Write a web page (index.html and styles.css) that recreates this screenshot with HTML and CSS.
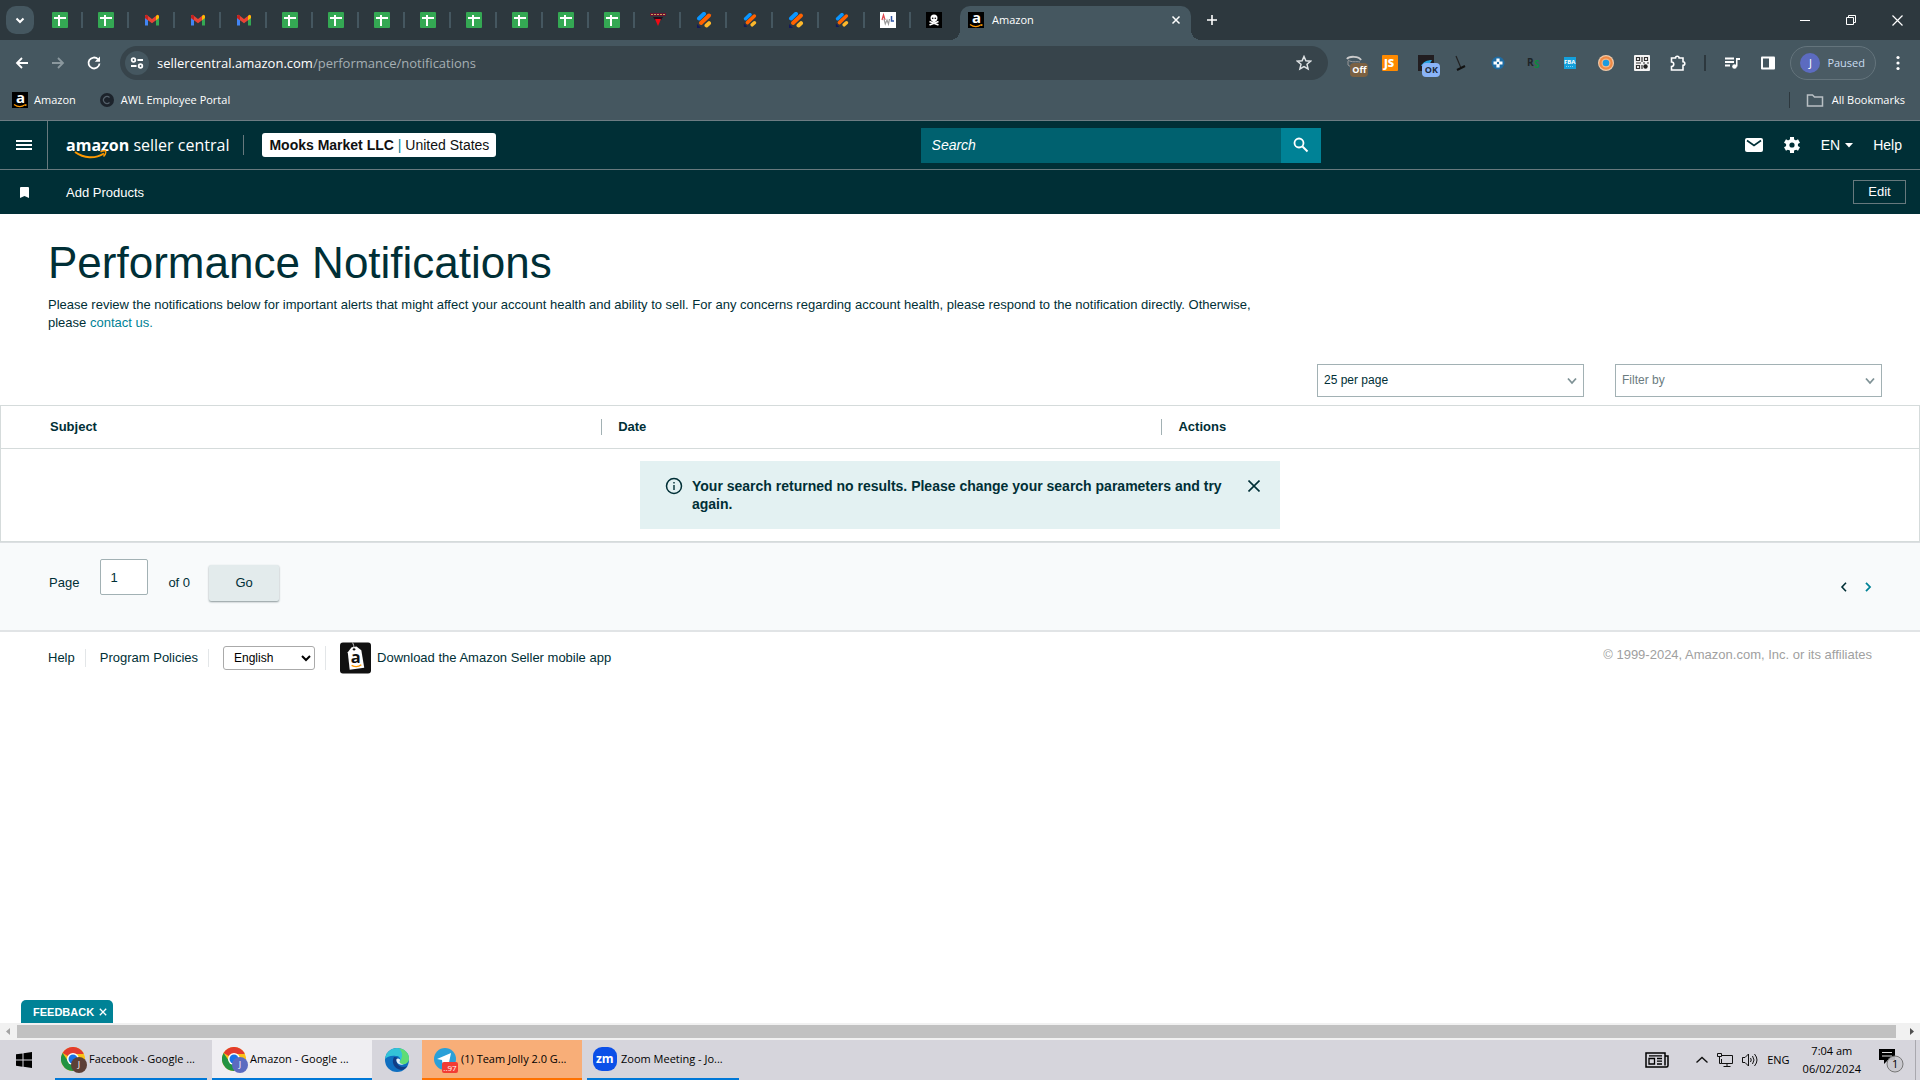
FILE: index.html
```html
<!DOCTYPE html>
<html lang="en">
<head>
<meta charset="utf-8">
<title>Amazon</title>
<link rel="stylesheet" href="styles.css">
</head>
<body>
<svg class="sprite" aria-hidden="true">
  <symbol id="sheet" viewBox="0 0 16 16"><rect width="16" height="16" rx="1" fill="#34a853"/><path d="M2 6h12M7 3v11" stroke="#fff" stroke-width="2" fill="none"/></symbol>
  <symbol id="gmail" viewBox="0 0 16 16"><path d="M1 5v8.500h3V7z" fill="#4285f4"/><path d="M15 5v8.500h-3V7z" fill="#34a853"/><path d="M1 3.500 2.500 2.800 8 7l5.500-4.200L15 3.500V6l-7 5.300L1 6z" fill="#ea4335"/><path d="M12 4 13.500 2.800 15 4v2l-3 2.200z" fill="#fbbc04"/><path d="M1 4v2l3 2.200V4L2.500 2.800z" fill="#c5221f"/></symbol>
  <symbol id="stripes" viewBox="0 0 16 16"><path d="M3 6.500 8 1.800" stroke="#0a95ff" stroke-width="4" stroke-linecap="round"/><path d="M5 11 13 3.500" stroke="#ff6200" stroke-width="4" stroke-linecap="round"/><path d="m10.500 13.500 2.500-2.300" stroke="#fdb82b" stroke-width="4" stroke-linecap="round"/><path d="M1 12v4h4z" fill="#14195a"/></symbol>
  <symbol id="amz" viewBox="0 0 16 16"><rect width="16" height="16" fill="#000"/><text x="4" y="11" font-size="15" font-weight="700" font-family="Open Sans, sans-serif" fill="#fff">a</text><path d="M2 12.500c3.500 2.500 8 2.500 11 .3M13.800 12v2" stroke="#f90" stroke-width="1.200" fill="none"/></symbol>
  <symbol id="chrome" viewBox="0 0 24 24"><circle cx="12" cy="12" r="12" fill="#fbc116"/><path d="M12 12 1.600 6A12 12 0 0 1 22.400 6L22.400 7H12z" fill="#e33b2e"/><path d="M1.600 6A12 12 0 0 0 12 24l5-9-5-3-5 2z" fill="#229342"/><circle cx="12" cy="12" r="6" fill="#fff"/><circle cx="12" cy="12" r="4.500" fill="#1a73e8"/></symbol>
</svg>

<div class="tabstrip">
  <button class="tab-search" aria-label="Search tabs"><svg width="12" height="12" viewBox="0 0 12 12"><path d="m2.500 4.500 3.500 3.500 3.500-3.500" fill="none" stroke="#fff" stroke-width="2"/></svg></button>
  <div class="pins">
    <span class="pin"><svg><use href="#sheet"/></svg></span>
    <span class="pin"><svg><use href="#sheet"/></svg></span>
    <span class="pin"><svg><use href="#gmail"/></svg></span>
    <span class="pin"><svg><use href="#gmail"/></svg></span>
    <span class="pin"><svg><use href="#gmail"/></svg></span>
    <span class="pin"><svg><use href="#sheet"/></svg></span>
    <span class="pin"><svg><use href="#sheet"/></svg></span>
    <span class="pin"><svg><use href="#sheet"/></svg></span>
    <span class="pin"><svg><use href="#sheet"/></svg></span>
    <span class="pin"><svg><use href="#sheet"/></svg></span>
    <span class="pin"><svg><use href="#sheet"/></svg></span>
    <span class="pin"><svg><use href="#sheet"/></svg></span>
    <span class="pin"><svg><use href="#sheet"/></svg></span>
    <span class="pin"><svg viewBox="0 0 16 16"><path d="M0 1h16v3H0z" fill="#6b1230"/><path d="M1 2.500h14" stroke="#c9a25a" stroke-dasharray="2 1"/><path d="M3 5h10l-2 3H5z" fill="#2a0a1a"/><path d="M5 7h6l-3 7z" fill="#f00a14"/></svg></span>
    <span class="pin"><svg><use href="#stripes"/></svg></span>
    <span class="pin small"><svg><use href="#stripes"/></svg></span>
    <span class="pin"><svg><use href="#stripes"/></svg></span>
    <span class="pin small"><svg><use href="#stripes"/></svg></span>
    <span class="pin"><svg viewBox="0 0 16 16"><rect width="16" height="16" fill="#fff"/><path d="m2 8 1.500-5L5 8" stroke="#e0484f" stroke-width="1.300" fill="none"/><path d="m4 7 1.300 5L7 8l1.500 4L9.500 7" stroke="#999" stroke-width="1.200" fill="none"/><path d="M11.500 4v5H14" stroke="#3155a5" stroke-width="1.500" fill="none"/></svg></span>
    <span class="pin last"><svg viewBox="0 0 16 16"><rect width="16" height="16" fill="#000"/><circle cx="8" cy="6" r="3.500" fill="#fff"/><path d="M6.500 8h3v2.500h-3z" fill="#fff"/><path d="m3.500 9.500 9 3.500m0-3.500-9 3.500" stroke="#fff" stroke-width="1.600"/><circle cx="6.700" cy="6.300" r=".8"/><circle cx="9.300" cy="6.300" r=".8"/></svg></span>
  </div>
  <div class="tab-active">
    <svg width="16" height="16"><use href="#amz"/></svg><span>Amazon</span>
    <button aria-label="Close tab"><svg width="10" height="10" viewBox="0 0 10 10"><path d="m1.500 1.500 7 7m0-7-7 7" stroke="#fff" stroke-width="1.500"/></svg></button>
  </div>
  <button class="new-tab" aria-label="New tab"><svg width="12" height="12" viewBox="0 0 12 12"><path d="M6 1v10M1 6h10" stroke="#fff" stroke-width="1.600"/></svg></button>
  <div class="win">
    <button aria-label="Minimize"><svg width="10" height="10" viewBox="0 0 10 10"><path d="M0 5.500h10" stroke="#fff"/></svg></button>
    <button aria-label="Restore"><svg width="10" height="10" viewBox="0 0 10 10"><path d="M.5 2.500h7v7h-7zM2.500 2.500v-2h7v7h-2" fill="none" stroke="#fff"/></svg></button>
    <button aria-label="Close"><svg width="11" height="11" viewBox="0 0 11 11"><path d="m.5.5 10 10m0-10-10 10" stroke="#fff" stroke-width="1.200"/></svg></button>
  </div>
</div>

<div class="toolbar">
  <div class="nav">
    <button aria-label="Back"><svg width="16" height="16" viewBox="0 0 16 16"><path d="M14 8H3m5-5L3 8l5 5" fill="none" stroke="#fff" stroke-width="1.800"/></svg></button>
    <button aria-label="Forward"><svg width="16" height="16" viewBox="0 0 16 16"><path d="M2 8h11M8 3l5 5-5 5" fill="none" stroke="#8b989e" stroke-width="1.800"/></svg></button>
    <button aria-label="Reload"><svg width="16" height="16" viewBox="0 0 16 16"><path d="M13.500 8.500A5.500 5.500 0 1 1 12 4.200" fill="none" stroke="#fff" stroke-width="1.800"/><path d="M14 1.500v5.300H8.800z" fill="#fff"/></svg></button>
  </div>
  <div class="omnibox">
    <span class="site"><svg width="14" height="14" viewBox="0 0 14 14" fill="none" stroke="#fff" stroke-width="1.800"><circle cx="3.500" cy="4" r="1.800"/><path d="M7.500 4H13M1 10h5.500"/><circle cx="10.500" cy="10" r="1.800"/></svg></span>
    <span class="url">sellercentral.amazon.com<i>/performance/notifications</i></span>
    <svg width="16" height="16" viewBox="0 0 16 16"><path d="m8 1.500 1.900 4.300 4.700.4-3.600 3.100 1.100 4.600L8 11.500l-4.100 2.400L5 9.300 1.400 6.200l4.700-.4z" fill="none" stroke="#dfe3e5" stroke-width="1.500"/></svg>
  </div>
  <div class="exts">
    <span class="ext"><svg viewBox="0 0 16 16" fill="none" stroke="#ccc"><path d="M1 4c2-3 12-3 14 1" stroke-width="2"/><path d="M2 5c4 3 8 1 12 2M2 6v4l3 2" stroke="#999"/></svg><b class="badge off">Off</b></span>
    <span class="ext"><svg viewBox="0 0 16 16"><rect width="16" height="16" rx="1" fill="#ff8a00"/><text x="2" y="12" font-size="11" font-weight="800" font-family="Open Sans, sans-serif" fill="#fff">JS</text></svg></span>
    <span class="ext"><svg viewBox="0 0 16 16"><rect width="16" height="16" fill="#211d20"/><path d="M3 11c2-4 6-6 11-6l-3 5z" fill="#28a3e0"/></svg><b class="badge ok">OK</b></span>
    <span class="ext"><svg viewBox="0 0 16 16"><path d="m2 1 5 12" stroke="#222" stroke-width="1.200"/><path d="m3 15 8-4" stroke="#111" stroke-width="2"/></svg></span>
    <span class="ext"><svg viewBox="0 0 16 16"><circle cx="8" cy="8" r="6.500" fill="#1f6ca3"/><path d="M8 3.500v9M3.500 8h9" stroke="#fff" stroke-width="3.200"/><circle cx="8" cy="8" r="1.200" fill="#1f6ca3"/></svg></span>
    <span class="ext"><svg viewBox="0 0 16 16" font-weight="700" font-family="Open Sans, sans-serif" font-size="10"><text x="1" y="11" fill="#1c2427">R</text><text x="8" y="13" fill="#0b8a3e">S</text></svg></span>
    <span class="ext"><svg viewBox="0 0 16 16"><rect x="2" y="2" width="12" height="12" fill="#14a0dc"/><text x="2" y="9" font-size="6" font-weight="700" font-family="Open Sans, sans-serif" fill="#fff">FBA</text><path d="M4 11.500h8" stroke="#7fd0f0" stroke-dasharray="1 1"/></svg></span>
    <span class="ext"><svg viewBox="0 0 16 16"><circle cx="8" cy="8" r="8" fill="#f0c9a8"/><circle cx="8" cy="8" r="6.800" fill="#ef8a45"/><circle cx="8" cy="8" r="4.500" fill="#f7b98a"/><circle cx="8" cy="8" r="3.300" fill="#1d9be0"/></svg></span>
    <span class="ext"><svg viewBox="0 0 16 16"><rect width="16" height="16" rx="1" fill="#f4f4f4"/><path d="M2.500 2.500h3v3h-3zM10.500 2.500h3v3h-3zM2.500 10.500h3v3h-3zM2 8h5M8 2v5M9 8h2M13 8h2M8 10v4" fill="none" stroke="#333" stroke-width="1.200"/><circle cx="11.500" cy="11.500" r="2.200" fill="#222"/></svg></span>
    <span class="ext"><svg viewBox="0 0 16 16"><path d="M1.500 3h4a1.800 1.800 0 0 1 3.600 0H13v3.800a1.800 1.800 0 0 1 0 3.600V15H1.500v-3.500a2 2 0 0 0 0-4.500z" fill="none" stroke="#fff" stroke-width="1.600"/></svg></span>
  </div>
  <div class="chrome-menu">
    <svg width="16" height="16" viewBox="0 0 16 16"><path d="M1 3.500h9M1 7h9M1 10.500h5" stroke="#fff" stroke-width="1.800"/><circle cx="10.500" cy="11.500" r="2.300" fill="#fff"/><path d="M12 11.500V3h4v2h-2.500v6.500z" fill="#fff"/></svg>
    <svg width="16" height="16" viewBox="0 0 16 16"><rect x="1" y="1.500" width="14" height="13" rx="1" fill="#fff"/><path d="M3 3.500h6v9H3z" fill="#455760"/></svg>
    <button class="profile"><b>J</b>Paused</button>
    <svg width="16" height="16" viewBox="0 0 16 16" fill="#fff"><circle cx="8" cy="2.500" r="1.600"/><circle cx="8" cy="8" r="1.600"/><circle cx="8" cy="13.500" r="1.600"/></svg>
  </div>
</div>

<div class="bookmarks">
  <a href="#"><svg width="16" height="16"><use href="#amz"/></svg>Amazon</a>
  <a href="#"><svg width="16" height="16" viewBox="0 0 16 16"><circle cx="8" cy="8" r="7" fill="#1c232b"/><path d="M10.500 5.500a3.500 3.500 0 1 0 0 5" fill="none" stroke="#54606a" stroke-width="1.200"/></svg>AWL Employee Portal</a>
  <a href="#" class="all"><svg width="18" height="16" viewBox="0 0 18 16"><path d="M1.500 3h5l2 2h8v9h-15z" fill="none" stroke="#b9c0c4" stroke-width="1.500"/></svg>All Bookmarks</a>
</div>

<header class="masthead">
  <button class="burger" aria-label="Menu"><svg width="16" height="12" viewBox="0 0 16 12"><path d="M0 2h16M0 6h16M0 10h16" stroke="#fff" stroke-width="2"/></svg></button>
  <a href="#" class="logo"><b>amazon</b> seller central<svg width="34" height="10" viewBox="0 0 34 10"><path d="M1 2c9 6.500 20 7 29 1.500" fill="none" stroke="#f90" stroke-width="2"/><path d="M26.500 1.800c2-.9 4-1.200 5-.8.500 1-.2 3.500-2 5.500" fill="none" stroke="#f90" stroke-width="1.500"/></svg></a>
  <button class="account"><b>Mooks Market LLC</b> <i>|</i> United States</button>
  <form class="search"><input type="text" placeholder="Search" aria-label="Search"><button type="button" aria-label="Go"><svg width="16" height="16" viewBox="0 0 16 16"><circle cx="6" cy="6" r="4.500" fill="none" stroke="#fff" stroke-width="1.800"/><path d="m9.500 9.500 5 5" stroke="#fff" stroke-width="2"/></svg></button></form>
  <nav class="tools">
    <a href="#" aria-label="Messages"><svg width="18" height="14" viewBox="0 0 18 14"><rect width="18" height="14" rx="2" fill="#fff"/><path d="m2 2.500 7 5 7-5" fill="none" stroke="#002f36" stroke-width="1.600"/></svg></a>
    <a href="#" aria-label="Settings"><svg width="18" height="18" viewBox="0 0 18 18"><g stroke="#fff" stroke-width="4"><path d="M9 1v16M2 5l14 8M2 13l14-8"/></g><circle cx="9" cy="9" r="6" fill="#fff"/><circle cx="9" cy="9" r="2.600" fill="#002f36"/></svg></a>
    <a href="#" class="lang">EN<svg width="8" height="5" viewBox="0 0 8 5"><path d="M0 0h8L4 4.500z" fill="#fff"/></svg></a>
    <a href="#">Help</a>
  </nav>
</header>
<div class="favbar">
  <svg width="9" height="11" viewBox="0 0 9 11"><path d="M0 1q0-1 1-1h7q1 0 1 1v10L4.500 9 0 11z" fill="#fff"/></svg>
  <a href="#">Add Products</a>
  <button>Edit</button>
</div>

<main>
  <section class="intro">
    <h1>Performance Notifications</h1>
    <p>Please review the notifications below for important alerts that might affect your account health and ability to sell. For any concerns regarding account health, please respond to the notification directly. Otherwise, please <a href="#">contact us.</a></p>
  </section>
  <div class="filters">
    <span class="pick"><select aria-label="Results per page"><option>25 per page</option></select><svg width="10" height="8" viewBox="0 0 10 8"><path d="m1 1.500 4 4.500 4-4.500" fill="none" stroke="#7f9296" stroke-width="1.800"/></svg></span>
    <span class="pick muted"><select aria-label="Filter by"><option>Filter by</option></select><svg width="10" height="8" viewBox="0 0 10 8"><path d="m1 1.500 4 4.500 4-4.500" fill="none" stroke="#7f9296" stroke-width="1.800"/></svg></span>
  </div>
  <table>
    <thead><tr><th class="subject">Subject</th><th class="date"><span>Date</span></th><th><span>Actions</span></th></tr></thead>
    <tbody><tr><td colspan="3">
      <div class="alert" role="status">
        <svg width="18" height="18" viewBox="0 0 18 18"><circle cx="9" cy="9" r="7.500" fill="none" stroke="#002f36" stroke-width="1.500"/><path d="M9 8v5M9 5v1.500" stroke="#002f36" stroke-width="1.400"/></svg>
        <strong>Your search returned no results. Please change your search parameters and try again.</strong>
        <button aria-label="Dismiss"><svg width="12" height="12" viewBox="0 0 12 12"><path d="m.5.5 11 11m0-11-11 11" stroke="#002f36" stroke-width="1.600"/></svg></button>
      </div>
    </td></tr></tbody>
  </table>
  <form class="pager">
    <label for="pg">Page</label><input id="pg" type="text" value="1"><span>of 0</span><button type="button" class="go">Go</button>
    <div class="steps">
      <button type="button" aria-label="Previous"><svg width="8" height="10" viewBox="0 0 8 10"><path d="M6 .8 2 5l4 4.200" fill="none" stroke="#002f36" stroke-width="1.600"/></svg></button>
      <button type="button" aria-label="Next"><svg width="8" height="10" viewBox="0 0 8 10"><path d="m2 .8 4 4.200-4 4.200" fill="none" stroke="#008296" stroke-width="1.800"/></svg></button>
    </div>
  </form>
  <footer>
    <a href="#" class="cell">Help</a>
    <a href="#" class="cell">Program Policies</a>
    <span class="cell"><select aria-label="Language"><option>English</option></select></span>
    <a href="#" class="app"><svg width="31" height="32" viewBox="0 0 32 32"><rect width="32" height="32" rx="3" fill="#111"/><path d="m8 10 4-5 5-1 5 4 3 18-15 2z" fill="#fff"/><circle cx="14.500" cy="7" r="1.300" fill="#111"/><path d="M14.500 6.500C14.500 4 14 2 13 0" stroke="#ccc" fill="none"/><text x="11" y="21" font-size="17" font-weight="700" font-family="Open Sans, sans-serif" fill="#111">a</text><path d="M12 23.500c3.500 2 7 1.800 10-.5" stroke="#f90" stroke-width="1.500" fill="none"/></svg>Download the Amazon Seller mobile app</a>
    <small>© 1999-2024, Amazon.com, Inc. or its affiliates</small>
  </footer>
  <button class="feedback">FEEDBACK<svg width="8" height="8" viewBox="0 0 8 8"><path d="m.8.8 6.400 6.400m0-6.400L.8 7.200" stroke="#fff" stroke-width="1.300"/></svg></button>
</main>

<div class="hscroll">
  <svg width="17" height="17" viewBox="0 0 17 17"><path d="M10 5v7L6 8.500z" fill="#a3a3a3"/></svg>
  <div class="thumb"></div>
  <svg width="17" height="17" viewBox="0 0 17 17"><path d="M7 5v7l4-3.500z" fill="#505050"/></svg>
</div>

<div class="taskbar">
  <button class="start" aria-label="Start"><svg width="16" height="16" viewBox="0 0 16 16"><path d="M0 2.300 6.500 1.400v6.200H0zM7.500 1.200 16 0v7.600H7.500zM0 8.500h6.500v6.200L0 13.800zM7.500 8.500H16V16l-8.500-1.200z"/></svg></button>
  <button class="task gap"><span class="ico"><svg width="24" height="24"><use href="#chrome"/></svg><b class="who brown">J</b></span>Facebook - Google ...</button>
  <button class="task current"><span class="ico"><svg width="24" height="24"><use href="#chrome"/></svg><b class="who indigo">J</b></span>Amazon - Google ...</button>
  <button class="edge" aria-label="Edge"><svg width="24" height="24" viewBox="0 0 24 24"><circle cx="12" cy="12" r="12" fill="#0f6fc0"/><path d="M0 11C1 4 6 0 12 0c7 0 12 5 12 10 0 4-3 6-6 6s-4-1-3-3c1-3-1-5-4-5C6 7 2 9 0 11z" fill="#33c3d8"/><path d="M14 .2c6 1 10 5 10 10 0 4-3 6-6 6s-4-1-3-3c3-4 3-9-1-13z" fill="#5fdc74"/><path d="M9 9c-3 5 0 12 7 13 3 0 5-2 6.500-4-4 2-9 1-10.500-3-1-2 0-4 1-5-1-1-3-1-4-1z" fill="#123e86"/><path d="M11.500 11c1-1 2.500-.5 3.500.5.500 1-1 2 0 3.500 1 1.200 3 1.200 4.500.8-3 1.700-6 .7-7.200-1-.8-1.300-1.200-2.600-.8-3.800z" fill="#e4f4fb"/></svg></button>
  <button class="task alerting"><span class="ico"><svg width="24" height="24" viewBox="0 0 24 24"><circle cx="12" cy="12" r="11" fill="#2aa0d8"/><path d="m4 12 14-6-2.500 12-4-3-2 2-.5-4z" fill="#fff"/></svg><b class="count">..97</b></span>(1) Team Jolly 2.0 G...</button>
  <button class="task zoom"><span class="ico"><svg width="24" height="24" viewBox="0 0 24 24"><rect width="24" height="24" rx="9" fill="#0b4fe8"/><text x="3" y="16" font-size="12" font-weight="700" font-family="Open Sans, sans-serif" fill="#fff">zm</text></svg></span>Zoom Meeting - Jo...</button>
  <div class="tray">
    <svg width="24" height="16" viewBox="0 0 24 16" fill="none" stroke="#000" stroke-width="1.500"><path d="M20 1H1v14h20.500a1.500 1.500 0 0 0 1.500-1.500V4h-3zM20 4v9.500"/><path d="M4 6.500h5.500v5.500H4zM4 3.800h13M12 6.500h5M12 9.200h5M12 12h5" stroke-width="1.300"/></svg>
    <svg class="up" width="12" height="8" viewBox="0 0 12 8"><path d="m.5 6.500 5.500-5 5.500 5" fill="none" stroke="#111" stroke-width="1.400"/></svg>
    <svg width="16" height="14" viewBox="0 0 16 14" fill="none" stroke="#111"><path d="M5 2.500h10.500v8H4.500V6M10 10.500v3M6.500 13.500h7M.5.500h4v3h-4zM2.500 3.500v7h2"/></svg>
    <svg width="16" height="14" viewBox="0 0 16 14" fill="none" stroke="#111"><path d="M.5 4.500H3L6.500 1v12L3 9.500H.5zM8.500 5q1.500 2 0 4M10.500 3q3 4 0 8M12.500 1q5 6 0 12"/></svg>
    <span>ENG</span>
    <span class="clock">7:04 am<br>06/02/2024</span>
    <svg width="26" height="26" viewBox="0 0 26 26"><path d="M0 2h16v11H9l-4 4v-4H0z"/><path d="M3 5.500h10M3 9h10" stroke="#ddd"/><circle cx="16" cy="17" r="8" fill="#c9c8cd" fill-opacity=".9" stroke="#777"/><text x="13" y="21" font-size="11" font-family="Open Sans, sans-serif">1</text></svg>
  </div>
</div>
</body>
</html>
```
FILE: styles.css
```css
* { box-sizing: border-box; }
body {
  margin: 0;
  min-height: 100vh;
  display: flex;
  flex-direction: column;
  background: #fff;
  color: #002f36;
  font: 13px/18px "Liberation Sans", Arial, sans-serif;
}
button, input, select { font: inherit; color: inherit; margin: 0; }
button { border: 0; padding: 0; background: none; }
a { color: inherit; text-decoration: none; }
svg { display: block; flex: none; }
.sprite { display: none; }

/* Browser frame */
.tabstrip, .toolbar, .bookmarks, .taskbar {
  display: flex;
  align-items: center;
  font: 11px/16px "Open Sans", sans-serif;
  color: #fff;
}
.tabstrip { height: 40px; background: #2d383e; }
.tab-search {
  width: 28px;
  height: 28px;
  margin: 0 3px 0 6px;
  border-radius: 10px;
  background: #455760;
  display: grid;
  place-items: center;
}
.pins { display: flex; }
.pin {
  width: 46px;
  height: 16px;
  padding-left: 15px;
  border-right: 2px solid #455760;
}
.pin svg { width: 16px; height: 16px; }
.pin.small svg { padding: 1px; }
.pin.last { border-color: transparent; }
.tab-active {
  position: relative;
  display: flex;
  align-items: center;
  align-self: flex-end;
  gap: 8px;
  width: 231px;
  height: 34px;
  margin-left: 3px;
  padding: 0 10px 6px 8px;
  border-radius: 10px 10px 0 0;
  background: #455760;
}
.tab-active::before, .tab-active::after {
  content: "";
  position: absolute;
  bottom: 0;
  width: 10px;
  height: 10px;
}
.tab-active::before { right: 100%; background: radial-gradient(circle at 0 0, transparent 10px, #455760 10px); }
.tab-active::after { left: 100%; background: radial-gradient(circle at 100% 0, transparent 10px, #455760 10px); }
.tab-active button { margin-left: auto; }
.new-tab { margin-left: 15px; }
.win { display: flex; margin-left: auto; }
.win button { width: 46px; height: 40px; display: grid; place-items: center; }

.toolbar { height: 40px; padding: 6px 14px 0; background: #455760; }
.nav { display: flex; gap: 20px; margin-right: 18px; }
.omnibox {
  flex: 1;
  display: flex;
  align-items: center;
  height: 34px;
  padding: 0 16px 0 5px;
  border-radius: 17px;
  background: #37444b;
}
.site {
  width: 24px;
  height: 24px;
  border-radius: 12px;
  background: #455760;
  display: grid;
  place-items: center;
}
.url { flex: 1; margin-left: 8px; font-size: 13px; }
.url i { font-style: normal; color: #a5afb3; }
.exts {
  display: flex;
  gap: 20px;
  margin-left: 18px;
  padding-right: 18px;
  border-right: 2px solid #2d383e;
}
.ext { position: relative; width: 16px; height: 16px; }
.ext svg { width: 16px; height: 16px; }
.badge {
  position: absolute;
  left: 4px;
  top: 8px;
  width: 18px;
  height: 14px;
  border-radius: 4px;
  font: bold 9px/14px "Open Sans", sans-serif;
  text-align: center;
}
.off { background: #7b6142; }
.ok { background: #8ab4f8; color: #1c2a3a; }
.chrome-menu { display: flex; align-items: center; gap: 14px; margin-left: 18px; }
.chrome-menu > svg:first-child { margin-right: 6px; }
.profile {
  display: flex;
  align-items: center;
  gap: 7px;
  height: 34px;
  padding: 0 10px 0 9px;
  border: 1px solid #64747c;
  border-radius: 17px;
  background: #4a5b64;
  color: #c9dcf0;
}
.profile b { width: 20px; border-radius: 10px; background: #5c6bc0; font-weight: 400; line-height: 20px; color: #fff; }

.bookmarks {
  height: 41px;
  gap: 23px;
  padding: 0 15px 0 12px;
  border-bottom: 1px solid #6d7c83;
  background: #455760;
}
.bookmarks a { display: flex; align-items: center; gap: 6px; }
.bookmarks .all { margin-left: auto; padding-left: 16px; border-left: 1px solid #2d383e; gap: 8px; }

/* Seller Central header */
.masthead {
  display: flex;
  align-items: center;
  height: 49px;
  padding-right: 18px;
  border-bottom: 1px solid #67797d;
  background: #002f36;
  color: #fff;
  font-size: 14px;
}
.burger { width: 48px; align-self: stretch; border-right: 1px solid #67797d; display: grid; place-items: center; }
.logo {
  position: relative;
  margin-left: 18px;
  padding-right: 14px;
  border-right: 1px solid #67797d;
  font: 16px/20px "Open Sans", sans-serif;
}
.logo svg { position: absolute; left: 8px; top: 15px; }
.account {
  height: 24px;
  margin-left: 18px;
  padding: 0 7px;
  border-radius: 3px;
  background: #fff;
  color: #0f1111;
}
.account i { font-style: normal; color: #008296; }
.search { display: flex; width: 400px; height: 35px; margin: 0 auto; }
.search input {
  flex: 1;
  min-width: 0;
  padding: 0 11px;
  border: 0;
  background: #00616f;
  font-style: italic;
}
.search input::placeholder { color: #fff; opacity: 1; }
.search button { width: 40px; background: #008296; display: grid; place-items: center; }
.tools { display: flex; align-items: center; gap: 20px; }
.lang { display: flex; align-items: center; gap: 5px; }

.favbar {
  display: flex;
  align-items: center;
  height: 44px;
  padding: 0 14px 0 20px;
  background: #002f36;
  color: #fff;
}
.favbar a { margin-left: 37px; padding-top: 2px; }
.favbar button { margin-left: auto; width: 53px; height: 24px; border: 1px solid #67797d; }

/* Page content */
main { position: relative; flex: 1; }
.intro { padding: 23px 48px 0; }
h1 { margin: 0; font-size: 44px; line-height: 52px; font-weight: 400; }
.intro p { max-width: 1240px; margin: 7px 0 0; }
.intro a { color: #008296; }
.filters { display: flex; justify-content: flex-end; gap: 31px; margin: 32px 38px 8px; }
.pick { display: grid; width: 267px; align-items: center; }
.pick select, .pick svg { grid-area: 1 / 1; }
.pick select {
  appearance: none;
  height: 33px;
  padding: 0 6px 2px;
  border: 1px solid #a2b1b4;
  border-radius: 0;
  background: #fff;
  font-size: 12px;
}
.pick svg { justify-self: end; margin-right: 7px; pointer-events: none; }
.muted select { color: #6b7c80; }

table { width: 100%; border-collapse: collapse; border: 1px solid #d5dbdb; }
th { height: 43px; padding: 0; text-align: left; border-bottom: 1px solid #d5dbdb; }
th span { display: block; padding-left: 16px; border-left: 1px solid #a2b1b4; line-height: 16px; }
.subject { width: 31.3%; padding-left: 49px; }
.date { width: 29.2%; }
td { padding: 12px 0; }
.alert {
  display: flex;
  align-items: flex-start;
  gap: 9px;
  width: 640px;
  margin: 0 auto;
  padding: 16px 20px 16px 25px;
  background: #e3f1f2;
  font-size: 14px;
}
.alert strong { flex: 1; }
.alert button { padding: 3px 0; }

.pager {
  display: flex;
  align-items: center;
  padding: 16px 48px 23px 49px;
  border-top: 1px solid #dcdfe2;
  border-bottom: 2px solid #e1e4e6;
  background: #f8fafb;
}
.pager input {
  width: 48px;
  height: 36px;
  margin: 0 20px 12px 21px;
  padding: 0 9px;
  border: 1px solid #a2b1b4;
  border-radius: 2px;
  background: #fff;
}
.go {
  width: 70px;
  height: 36px;
  margin-left: 19px;
  border-radius: 2px;
  background: #e3ebec;
  box-shadow: 0 1px 2px #8a9699;
}
.steps { display: flex; gap: 16px; margin-left: auto; padding-top: 8px; }

footer { display: flex; align-items: center; padding: 10px 48px; }
.cell { padding-right: 10px; margin-right: 14px; border-right: 1px solid #e3e6e8; }
.cell select { width: 92px; height: 24px; padding: 0 6px; border: 1px solid #aaa; border-radius: 3px; background: #fff; color: #000; font-size: 12px; }
.app { display: flex; align-items: center; gap: 6px; }
small { margin-left: auto; padding-bottom: 6px; font-size: 13px; color: #a0a0a0; }

.feedback {
  position: absolute;
  left: 21px;
  bottom: 0;
  display: flex;
  align-items: center;
  gap: 5px;
  height: 23px;
  padding: 0 6px 0 12px;
  border-radius: 5px 5px 0 0;
  background: #008296;
  color: #fff;
  font-size: 11px;
  font-weight: 700;
}

.hscroll { display: flex; height: 17px; background: #f1f1f1; }
.thumb { flex: 1; margin: 2px 7px 2px 0; background: #c1c1c1; }

/* Windows taskbar */
.taskbar { height: 40px; background: #d6d5dc; color: #000; }
.start { width: 48px; padding-left: 16px; }
.task {
  display: flex;
  align-items: center;
  gap: 4px;
  width: 152px;
  height: 40px;
  padding-left: 6px;
  border-bottom: 2px solid #0078d7;
  white-space: nowrap;
}
.gap { margin: 0 5px 0 7px; }
.current { width: 160px; padding-left: 10px; background: #efeef2; }
.edge { width: 50px; display: grid; place-items: center; }
.alerting { width: 160px; padding-left: 11px; margin-right: 5px; border-color: #ff7200; background: #f8ae78; }
.ico { position: relative; }
.who, .count { position: absolute; font-weight: 400; color: #fff; text-align: center; }
.who { left: 10px; top: 10px; width: 16px; border-radius: 8px; font-size: 9px; }
.brown { background: #5d4037; }
.indigo { background: #5c6bc0; }
.count { left: 9px; top: 15px; width: 16px; border-radius: 2px; background: #f23c34; font-size: 8px; line-height: 11px; }
.tray {
  display: flex;
  align-items: center;
  gap: 9px;
  height: 40px;
  margin: 0 4px 0 auto;
  padding-right: 10px;
  border-right: 1px solid #a9a8ae;
}
.up { margin-left: 18px; }
.clock { margin: 0 9px 0 4px; line-height: 18px; text-align: center; }
```
